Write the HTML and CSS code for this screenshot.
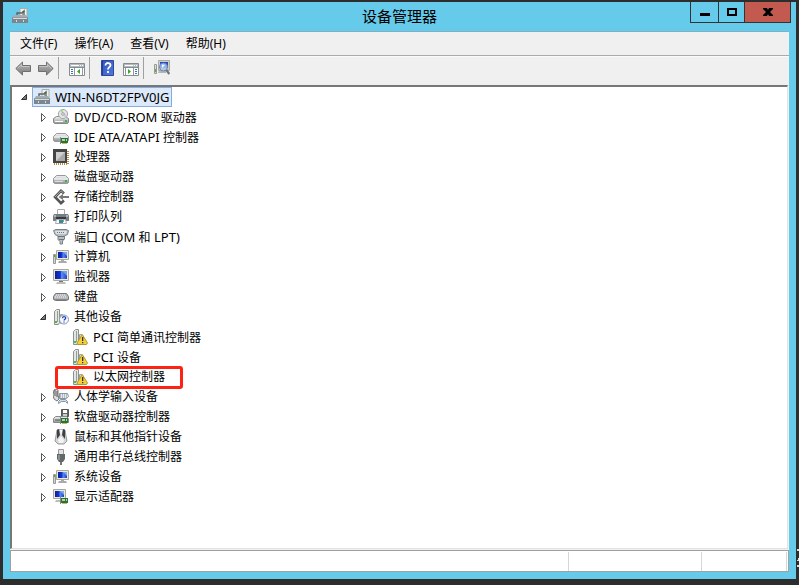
FILE: index.html
```html
<!DOCTYPE html>
<html lang="zh-CN">
<head>
    <meta charset="UTF-8">
    <meta name="viewport" content="width=device-width, initial-scale=1.0">
    <title>设备管理器</title>
    <link rel="stylesheet" href="styles.css">
</head>
<body>
    <svg class="sprite" aria-hidden="true">
        <defs>
            <linearGradient id="steel" x1="0" y1="0" x2="0" y2="1">
                <stop offset="0" stop-color="#f4f5f5"/>
                <stop offset="1" stop-color="#8d9396"/>
            </linearGradient>
            <linearGradient id="arrow" x1="0" y1="0" x2="0" y2="1">
                <stop offset="0" stop-color="#b9b9b9"/>
                <stop offset="1" stop-color="#7d7d7d"/>
            </linearGradient>
            <linearGradient id="screen" x1="0" y1="0" x2="1" y2="0">
                <stop offset="0" stop-color="#0a1fa0"/>
                <stop offset=".45" stop-color="#1436d0"/>
                <stop offset=".55" stop-color="#5f8cf0"/>
                <stop offset="1" stop-color="#1a3fd0"/>
            </linearGradient>
            <linearGradient id="book" x1="0" y1="0" x2="1" y2="1">
                <stop offset="0" stop-color="#3355b8"/>
                <stop offset="1" stop-color="#5277e0"/>
            </linearGradient>
        </defs>

        <symbol id="i-closed" viewBox="0 0 16 16">
            <path d="M6.5 4.5v8l4-4z" fill="#fff" stroke="#555"/>
        </symbol>
        <symbol id="i-open" viewBox="0 0 16 16">
            <path d="M10.5 5.5v5h-5z" fill="#777" stroke="#333"/>
        </symbol>

        <symbol id="i-root" viewBox="0 0 16 16">
            <path d="M8 .5h7v11H8z" fill="#eef0ec" stroke="#a9adab"/>
            <path d="M10 3h3v4h-3z" fill="#8bc46a"/>
            <path d="M11 4h2v3h-2z" fill="#fff"/>
            <path d="M5 7V5h5l2-2v5" fill="none" stroke="#59636a" stroke-width="1.4"/>
            <path d="M2 7h12l2 3H0z" fill="#a5adb2"/>
            <path d="M0 9.5h16V15H0z" fill="#7b868d"/>
            <path d="M1 10h14v1H1zM4 12h1v2H4zM11 12h1v2h-1z" fill="#d5dbde"/>
        </symbol>
        <symbol id="i-drive" viewBox="0 0 16 16">
            <path d="M.5 9.5l3-3h9l3 3v4l-1 1h-13l-1-1z" fill="url(#steel)" stroke="#999"/>
            <path d="M1 9.5h14v1H1z" fill="#fff"/>
            <path d="M2 12h8v1H2z" fill="#ddd"/>
            <path d="M12 11h2v2h-2z" fill="#3fb53f"/>
        </symbol>
        <symbol id="i-dvd" viewBox="0 0 16 16">
            <path d="M.5 9.5l3-2h9l3 2v4l-1 1h-13l-1-1z" fill="url(#steel)" stroke="#888"/>
            <circle cx="10" cy="5" r="4.6" fill="#e4e6e6" stroke="#a5a5a5"/>
            <path d="M10 5l-3-3.5A4 4 0 0 1 10 .5z" fill="#a9d99f"/>
            <path d="M10 5l4 1a4 4 0 0 1-2 3z" fill="#c6c6e9"/>
            <circle cx="10" cy="5" r="1.3" fill="#fff" stroke="#888" stroke-width=".8"/>
            <path d="M2 12h8v1H2z" fill="#fff"/>
            <path d="M12 11h2v2h-2z" fill="#3fb53f"/>
        </symbol>
        <symbol id="i-card" viewBox="0 0 16 16">
            <path d="M7 8h1v7H7z" fill="#888"/>
            <path d="M8 9h7v5H8z" fill="#28733a"/>
            <path d="M9 10h3v2H9zM13 10h1v2h-1z" fill="#b5d2b5"/>
            <path d="M9 14h5v1H9z" fill="#d2b44c"/>
        </symbol>
        <symbol id="i-ide" viewBox="0 0 16 16">
            <path d="M.5 7.5l3-3h9l3 3v4l-1 1h-13l-1-1z" fill="url(#steel)" stroke="#999"/>
            <path d="M1 7.5h14v1H1z" fill="#fff"/>
            <use href="#i-card"/>
        </symbol>
        <symbol id="i-cpu" viewBox="0 0 16 16">
            <path d="M1 15h14V1" fill="none" stroke="#b28e45" stroke-width="2" stroke-dasharray="1 1"/>
            <path d="M0 0h14v14H0z" fill="#454545"/>
            <path d="M3 3h9v9H3z" fill="#a9a9a9"/>
            <path d="M3 3h9l-9 9z" fill="#cfcfcf"/>
        </symbol>
        <symbol id="i-storage" viewBox="0 0 16 16">
            <path d="M11 4.500L8 1.800 2 8l6 6.200 3-2.700" fill="none" stroke="#555" stroke-width="2.600"/>
            <path d="M10.500 4L8 1.800 2 8" fill="none" stroke="#aaa"/>
            <path d="M5.500 8L10 5v2h6v2h-6v2z" fill="#777"/>
        </symbol>
        <symbol id="i-printer" viewBox="0 0 16 16">
            <path d="M4.500.5h7v6h-7z" fill="#fff" stroke="#aaa"/>
            <path d="M1 5h14l1 2v5H0V7z" fill="#777d80"/>
            <path d="M1 6h2v3h10V6h2v2H1z" fill="#aeb2b4"/>
            <path d="M3 8h10v2H3z" fill="#363a3c"/>
            <path d="M3.500 10.500h9l1 4h-11z" fill="#fff" stroke="#aaa"/>
            <path d="M6 11h4v3H6z" fill="#3787a8"/>
            <path d="M10 11h1v2h-1z" fill="#79b35b"/>
        </symbol>
        <symbol id="i-port" viewBox="0 0 16 16">
            <path d="M.5 1.500L3 .5h10l2.500 1-1 4-3 1.500v3l-2 2V15H7v-2.500l-2-2V7L2 5.500z" fill="#b8bec1" stroke="#788187"/>
            <path d="M2 2h12l-1 3H3z" fill="#dde2e5"/>
            <path d="M4 3h1v1H4zM6 3h1v1H6zM8 3h1v1H8zM10 3h1v1h-1zM5 7h6v1H5zM6 10h5v1H6z" fill="#66727a"/>
        </symbol>
        <symbol id="i-monitor" viewBox="0 0 16 16">
            <path d="M.5.5h15v11H.5z" fill="#ece9d8" stroke="#aaa89d"/>
            <path d="M2 2h12v8H2z" fill="url(#screen)"/>
            <path d="M9 2h5v5z" fill="#6f9df0"/>
            <path d="M6 12h4v1H6z" fill="#777"/>
            <path d="M4 13h8l1 2H3z" fill="#bdbdb8"/>
        </symbol>
        <symbol id="i-computer" viewBox="0 0 16 16">
            <path d="M.5 5.500h2v9h-2z" fill="#cfd3d3" stroke="#969a9c"/>
            <path d="M1 6h1v2H1z" fill="#35b935"/>
            <path d="M3.500 1.500h12v9h-12z" fill="#ece9d8" stroke="#aaa89d"/>
            <path d="M5 3h9v6H5z" fill="url(#screen)"/>
            <path d="M10 3h4v4z" fill="#7ca6f2"/>
            <path d="M8 11h3v1H8zM6 12h7l1 2H5z" fill="#aaa"/>
        </symbol>
        <symbol id="i-keyboard" viewBox="0 0 16 16">
            <path d="M2.500 4.500h11l2 3v3l-2 1h-11l-2-1v-3z" fill="#b7b8bc" stroke="#74767a"/>
            <path d="M3 6h10M2 8h12" stroke="#f4f4f4" stroke-dasharray="1 1"/>
            <path d="M1 10.500h14" stroke="#85878b"/>
        </symbol>
        <symbol id="i-tower" viewBox="0 0 16 16">
            <path d="M1.500 2.500l2-2h3v13l-1 2h-4z" fill="#e3e6e4" stroke="#8c9290"/>
            <path d="M4 2h1v11H4z" fill="#95a093"/>
            <path d="M2 12h2v2H2z" fill="#55b747"/>
            <path d="M7.500 5.500h2v9h-2z" fill="#d5d9d7" stroke="#9ca09e"/>
        </symbol>
        <symbol id="i-other" viewBox="0 0 16 16">
            <use href="#i-tower"/>
            <circle cx="11" cy="10.500" r="4.500" fill="#f7f9ff" stroke="#8b97b7"/>
            <path d="M9.500 9.300c0-2.200 3.200-2 3.200-.3 0 1.300-1.600 1.200-1.600 2.500M11 12.500v1" fill="none" stroke="#2348b7" stroke-width="1.300"/>
        </symbol>
        <symbol id="i-warn" viewBox="0 0 16 16">
            <use href="#i-tower"/>
            <path d="M10.300 5.500l5.200 8.500-1 1.500H5.500l-.5-1.500z" fill="#f3d03a" stroke="#b8972a" stroke-linejoin="round"/>
            <path d="M10 8h1.300v4H10zM10 13h1.300v1.300H10z" fill="#333"/>
        </symbol>
        <symbol id="i-hid" viewBox="0 0 16 16">
            <path d="M1 1l2-1 2 1v5l1 4-2 2-3-2-1-4z" fill="#dcdedf" stroke="#777"/>
            <path d="M2 1v6M4 8V2" stroke="#555"/>
            <path d="M6.500 4.500h8l1 3-2 2h-7z" fill="#e5eaee" stroke="#8795a2"/>
            <path d="M7 6h8M7 8h7" stroke="#7b8995" stroke-dasharray="1 1"/>
            <path d="M5.500 14.500v-2l2-2h5l2 2v2l-2-2h-4z" fill="#d4dbe1" stroke="#8795a2"/>
        </symbol>
        <symbol id="i-floppy" viewBox="0 0 16 16">
            <path d="M8.500.5h7v7h-7z" fill="#646464" stroke="#555"/>
            <path d="M10 1h4v3h-4z" fill="#fff"/>
            <path d="M10 5h4v2h-4z" fill="#ccc"/>
            <path d="M.5 9.500l2-2h11l2 2v4H.5z" fill="url(#steel)" stroke="#888"/>
            <path d="M2 11h5" stroke="#555"/>
            <use href="#i-card"/>
        </symbol>
        <symbol id="i-mouse" viewBox="0 0 16 16">
            <path d="M4 1l2-1h4l2 1 1 6 1 5-3 3H5l-3-3 1-5z" fill="#d5d6d8" stroke="#999"/>
            <path d="M4 1l2-1 1 6-3 4zM12 1l-2-1-1 6 3 4z" fill="#3d3f42"/>
            <path d="M7 1h2l-1 6z" fill="#fff"/>
            <path d="M5 11l3-4 3 4-1 3H6z" fill="#f3f3f3"/>
        </symbol>
        <symbol id="i-usb" viewBox="0 0 16 16">
            <path d="M5.500.5h5v6h-5z" fill="#e3e3e3" stroke="#999"/>
            <path d="M4 5h8v5l-2 3H6l-2-3z" fill="#62676a"/>
            <path d="M5 6h2v5H5z" fill="#8b9092"/>
            <path d="M7 13h2v3H7z" fill="#777"/>
        </symbol>
        <symbol id="i-display" viewBox="0 0 16 16">
            <path d="M.5.5h12v9H.5z" fill="#ece9d8" stroke="#aaa89d"/>
            <path d="M2 2h9v6H2z" fill="url(#screen)"/>
            <path d="M7 2h4v4z" fill="#7ca6f2"/>
            <path d="M3 11h5v2H2z" fill="#bbb"/>
            <use href="#i-card"/>
        </symbol>

        <symbol id="i-back" viewBox="0 0 16 16">
            <path d="M.8 8.500l6.700-6.500v3.500h8v6h-8V15z" fill="url(#arrow)" stroke="#707070"/>
            <path d="M2.500 8.500l4-4v2h8" fill="none" stroke="#ccc" stroke-width=".8"/>
        </symbol>
        <symbol id="i-forward" viewBox="0 0 16 16">
            <path d="M15.200 8.500L8.500 2v3.500h-8v6h8V15z" fill="url(#arrow)" stroke="#707070"/>
            <path d="M1.500 6.500h8v-2l4 4" fill="none" stroke="#ccc" stroke-width=".8"/>
        </symbol>
        <symbol id="i-panel" viewBox="0 0 16 16">
            <path d="M.5 3.500h15v12H.5z" fill="#fff" stroke="#858b91"/>
            <path d="M1 4h14v3H1z" fill="#b3bac0"/>
            <path d="M2 5h8v1H2zM11 5h1v1h-1zM13 5h1v1h-1z" fill="#fff"/>
            <path d="M1 7h14v1H1z" fill="#858b91"/>
        </symbol>
        <symbol id="i-tree" viewBox="0 0 16 16">
            <use href="#i-panel"/>
            <path d="M5.500 8v7M13.500 8v7" stroke="#8e99a3"/>
            <path d="M2 9.500h2M2 11.500h2M2 13.500h2" stroke="#3973a9"/>
            <path d="M11 9v5l-3-2.500z" fill="#36a620"/>
        </symbol>
        <symbol id="i-action" viewBox="0 0 16 16">
            <use href="#i-panel"/>
            <path d="M2.500 8v7M10.500 8v7" stroke="#8e99a3"/>
            <path d="M12 9.500h2M12 11.500h2M12 13.500h2" stroke="#3973a9"/>
            <path d="M5 9v5l3-2.500z" fill="#36a620"/>
        </symbol>
        <symbol id="i-help" viewBox="0 0 16 16">
            <path d="M1.500.5h12v15h-12z" fill="url(#book)" stroke="#2b469e"/>
            <path d="M2 1h1v14H2z" fill="#233e96"/>
            <path d="M5.500 5.500c0-3.500 5-3 5-.3 0 2-2.500 2-2.500 4.300M8 11v2" fill="none" stroke="#fff" stroke-width="1.800"/>
        </symbol>
        <symbol id="i-scan" viewBox="0 0 16 16">
            <path d="M.5 4.500h2v9h-2z" fill="#ddd" stroke="#999"/>
            <path d="M1 9h1v3H1z" fill="#4aba36"/>
            <path d="M4.500.5h11v10h-11z" fill="#d0cdc2" stroke="#aaa"/>
            <path d="M6 2h8v6H6z" fill="#1f46c8"/>
            <path d="M5 11h7v2H4z" fill="#b5b5b5"/>
            <circle cx="9.500" cy="7" r="4" fill="#a9c8f3" fill-opacity=".85" stroke="#6f86a5"/>
            <path d="M8 4.500l3 .5-3 3z" fill="#fff"/>
            <path d="M12.300 9.800l3 4.200" stroke="#70767e" stroke-width="2.200"/>
        </symbol>
    </svg>

    <div class="window">
        <header class="titlebar">
            <svg class="icon app-icon"><use href="#i-root"/></svg>
            <h1>设备管理器</h1>
            <div class="controls">
                <button type="button" class="min" aria-label="最小化">
                    <svg width="10" height="10"><path d="M0 6h10v3H0z"/></svg>
                </button>
                <button type="button" class="max" aria-label="最大化">
                    <svg width="10" height="10"><path d="M1 2h8v6H1z" fill="none" stroke="#000" stroke-width="2"/></svg>
                </button>
                <button type="button" class="close" aria-label="关闭">
                    <svg width="10" height="10"><path d="M0 1h4l1 2 1-2h4v1L7 5l3 3v1H6L5 7 4 9H0V8l3-3-3-3z"/></svg>
                </button>
            </div>
        </header>

        <div class="client">
            <nav class="menubar">
                <button type="button">文件(F)</button>
                <button type="button">操作(A)</button>
                <button type="button">查看(V)</button>
                <button type="button">帮助(H)</button>
            </nav>

            <div class="toolbar">
                <button type="button" aria-label="后退"><svg class="icon"><use href="#i-back"/></svg></button>
                <button type="button" aria-label="前进"><svg class="icon"><use href="#i-forward"/></svg></button>
                <span class="sep"></span>
                <button type="button" aria-label="显示/隐藏控制台树"><svg class="icon"><use href="#i-tree"/></svg></button>
                <span class="sep"></span>
                <button type="button" aria-label="帮助"><svg class="icon"><use href="#i-help"/></svg></button>
                <button type="button" aria-label="显示/隐藏操作窗格"><svg class="icon"><use href="#i-action"/></svg></button>
                <span class="sep"></span>
                <button type="button" aria-label="扫描检测硬件改动"><svg class="icon"><use href="#i-scan"/></svg></button>
            </div>

            <main class="tree">
                <ul>
                    <li>
                        <div class="row"><button type="button" class="toggle" aria-label="折叠"><svg class="icon"><use href="#i-open"/></svg></button><span class="label selected"><svg class="icon"><use href="#i-root"/></svg><span class="latin">WIN-N6DT2FPV0JG</span></span></div>
                        <ul>
                            <li><div class="row"><button type="button" class="toggle" aria-label="展开"><svg class="icon"><use href="#i-closed"/></svg></button><span class="label"><svg class="icon"><use href="#i-dvd"/></svg><span><span class="latin">DVD/CD-ROM </span>驱动器</span></span></div></li>
                            <li><div class="row"><button type="button" class="toggle" aria-label="展开"><svg class="icon"><use href="#i-closed"/></svg></button><span class="label"><svg class="icon"><use href="#i-ide"/></svg><span><span class="latin">IDE ATA/ATAPI </span>控制器</span></span></div></li>
                            <li><div class="row"><button type="button" class="toggle" aria-label="展开"><svg class="icon"><use href="#i-closed"/></svg></button><span class="label"><svg class="icon"><use href="#i-cpu"/></svg>处理器</span></div></li>
                            <li><div class="row"><button type="button" class="toggle" aria-label="展开"><svg class="icon"><use href="#i-closed"/></svg></button><span class="label"><svg class="icon"><use href="#i-drive"/></svg>磁盘驱动器</span></div></li>
                            <li><div class="row"><button type="button" class="toggle" aria-label="展开"><svg class="icon"><use href="#i-closed"/></svg></button><span class="label"><svg class="icon"><use href="#i-storage"/></svg>存储控制器</span></div></li>
                            <li><div class="row"><button type="button" class="toggle" aria-label="展开"><svg class="icon"><use href="#i-closed"/></svg></button><span class="label"><svg class="icon"><use href="#i-printer"/></svg>打印队列</span></div></li>
                            <li><div class="row"><button type="button" class="toggle" aria-label="展开"><svg class="icon"><use href="#i-closed"/></svg></button><span class="label"><svg class="icon"><use href="#i-port"/></svg><span>端口<span class="latin"> (COM </span>和<span class="latin"> LPT)</span></span></span></div></li>
                            <li><div class="row"><button type="button" class="toggle" aria-label="展开"><svg class="icon"><use href="#i-closed"/></svg></button><span class="label"><svg class="icon"><use href="#i-computer"/></svg>计算机</span></div></li>
                            <li><div class="row"><button type="button" class="toggle" aria-label="展开"><svg class="icon"><use href="#i-closed"/></svg></button><span class="label"><svg class="icon"><use href="#i-monitor"/></svg>监视器</span></div></li>
                            <li><div class="row"><button type="button" class="toggle" aria-label="展开"><svg class="icon"><use href="#i-closed"/></svg></button><span class="label"><svg class="icon"><use href="#i-keyboard"/></svg>键盘</span></div></li>
                            <li>
                                <div class="row"><button type="button" class="toggle" aria-label="折叠"><svg class="icon"><use href="#i-open"/></svg></button><span class="label"><svg class="icon"><use href="#i-other"/></svg>其他设备</span></div>
                                <ul class="leaves">
                                    <li><div class="row"><span class="label"><svg class="icon"><use href="#i-warn"/></svg><span><span class="latin">PCI </span>简单通讯控制器</span></span></div></li>
                                    <li><div class="row"><span class="label"><svg class="icon"><use href="#i-warn"/></svg><span><span class="latin">PCI </span>设备</span></span></div></li>
                                    <li><div class="row"><span class="label marked"><svg class="icon"><use href="#i-warn"/></svg>以太网控制器</span></div></li>
                                </ul>
                            </li>
                            <li><div class="row"><button type="button" class="toggle" aria-label="展开"><svg class="icon"><use href="#i-closed"/></svg></button><span class="label"><svg class="icon"><use href="#i-hid"/></svg>人体学输入设备</span></div></li>
                            <li><div class="row"><button type="button" class="toggle" aria-label="展开"><svg class="icon"><use href="#i-closed"/></svg></button><span class="label"><svg class="icon"><use href="#i-floppy"/></svg>软盘驱动器控制器</span></div></li>
                            <li><div class="row"><button type="button" class="toggle" aria-label="展开"><svg class="icon"><use href="#i-closed"/></svg></button><span class="label"><svg class="icon"><use href="#i-mouse"/></svg>鼠标和其他指针设备</span></div></li>
                            <li><div class="row"><button type="button" class="toggle" aria-label="展开"><svg class="icon"><use href="#i-closed"/></svg></button><span class="label"><svg class="icon"><use href="#i-usb"/></svg>通用串行总线控制器</span></div></li>
                            <li><div class="row"><button type="button" class="toggle" aria-label="展开"><svg class="icon"><use href="#i-closed"/></svg></button><span class="label"><svg class="icon"><use href="#i-computer"/></svg>系统设备</span></div></li>
                            <li><div class="row"><button type="button" class="toggle" aria-label="展开"><svg class="icon"><use href="#i-closed"/></svg></button><span class="label"><svg class="icon"><use href="#i-display"/></svg>显示适配器</span></div></li>
                        </ul>
                    </li>
                </ul>
            </main>

            <footer class="statusbar">
                <span class="pane main-pane"></span>
                <span class="pane wide-pane"></span>
                <span class="pane small-pane"></span>
            </footer>
        </div>
    </div>

    <!-- desktop text showing past the window edge -->
    <svg class="desktop-edge" width="2" height="22" aria-hidden="true">
        <path d="M0 3h2v2H0zM1 12h1v3H0v-1h1zM0 19h2v2H0z" fill="#ddd"/>
    </svg>
</body>
</html>
```

FILE: styles.css
```css
* {
    box-sizing: border-box;
}
body {
    display: flex;
    min-height: 100vh;
    margin: 0;
    padding: 2px 3px 6px;
    background: #2d2d2d;
    color: #000;
    font-family: "Noto Sans", "Noto Sans CJK SC", sans-serif;
    font-size: 12px;
    line-height: 20px;
}
button {
    margin: 0;
    padding: 0;
    border: 0;
    background: none;
    color: inherit;
    font: inherit;
}
ul {
    margin: 0;
    padding: 0;
    list-style: none;
}
.sprite {
    position: absolute;
    width: 0;
    height: 0;
}
.icon {
    display: block;
    flex: none;
    width: 16px;
    height: 16px;
}

/* window frame */
.window {
    display: flex;
    flex: 1;
    flex-direction: column;
    padding: 0 7px 7px;
    background: #66caea;
}
.titlebar {
    display: grid;
    grid-template-columns: 1fr auto 1fr;
    height: 29px;
}
.app-icon {
    margin: 6px 2px;
}
.titlebar h1 {
    margin: 0;
    font-size: 15px;
    font-weight: normal;
    line-height: 28px;
}
.controls {
    display: flex;
    justify-self: end;
    height: 21px;
    margin-right: -2px;
    border: 1px solid #333;
    border-top: 0;
}
.controls button {
    display: flex;
    align-items: center;
    justify-content: center;
    width: 27px;
}
.controls button + button {
    border-left: 1px solid #333;
}
.controls .max {
    width: 26px;
}
.controls .close {
    width: 46px;
    background: #c35a50;
}
.client {
    display: flex;
    flex: 1;
    flex-direction: column;
    border-top: 1px solid #7fb0c4;
    background: #f0f0f0;
}

/* menu and toolbar */
.menubar {
    display: flex;
    gap: 1px;
    height: 24px;
    padding-left: 2px;
    border-bottom: 1px solid #ababab;
}
.menubar button {
    padding: 0 8px;
}
.toolbar {
    display: flex;
    height: 29px;
    padding: 0 2px;
    border-top: 1px solid #fafafa;
}
.toolbar button {
    height: 22px;
    padding: 0 4px 0 3px;
}
.sep {
    width: 1px;
    height: 22px;
    margin-right: 7px;
    background: #a0a0a0;
}

/* device tree */
.tree {
    flex: 1;
    padding-left: 4px;
    border-style: solid;
    border-width: 2px 1px 1px 2px;
    border-color: #777 #e3e3e3 #e3e3e3 #777;
    margin-right: 1px;
    background: #fff;
}
.tree ul ul {
    padding-left: 19px;
}
.tree .leaves {
    padding-left: 35px;
}
.row {
    display: flex;
    height: 20px;
}
.toggle {
    width: 16px;
}
.label {
    display: flex;
    align-items: center;
    gap: 5px;
    padding: 0 1px;
    border: 1px solid transparent;
    white-space: nowrap;
}
.label.selected {
    border-color: #84acdd;
    background: #dce9fa;
}
.latin {
    font-size: 13px;
    white-space: pre;
}
.marked {
    position: relative;
}
.marked::after {
    position: absolute;
    top: -2px;
    right: -17px;
    bottom: -3px;
    left: -16px;
    border: 3px solid #fc2314;
    border-radius: 3px;
    content: "";
}

/* status bar */
.statusbar {
    display: flex;
    height: 22px;
    margin-top: 1px;
    padding: 1px 1px 0 0;
    border: 1px solid #a0a0a0;
    background: #fff;
}
.pane {
    border-right: 1px solid #d7d7d7;
}
.main-pane {
    flex: 1;
}
.wide-pane {
    width: 133px;
}
.small-pane {
    width: 85px;
}
.desktop-edge {
    position: absolute;
    right: 0;
    bottom: 17px;
}
```
